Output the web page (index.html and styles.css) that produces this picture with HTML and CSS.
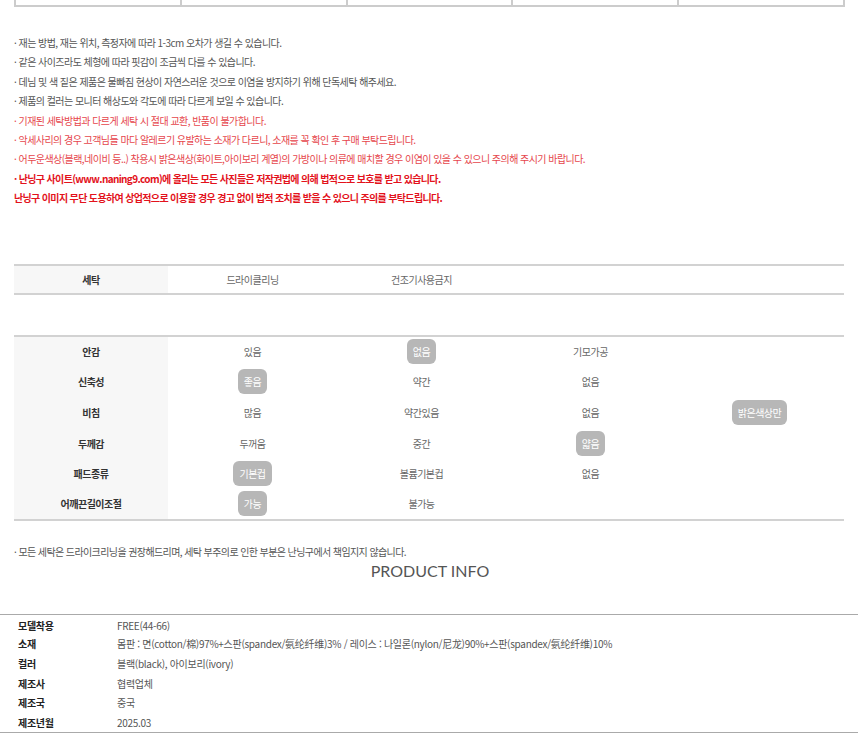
FILE: index.html
```html
<!DOCTYPE html>
<html lang="ko">
<head>
    <meta charset="UTF-8">
    <meta name="viewport" content="width=device-width, initial-scale=1.0">
    <title>상품 상세 정보</title>
    <link rel="stylesheet" href="styles.css">
</head>
<body>

<div class="size-bottom">
    <div class="size-cell"></div>
    <div class="size-cell"></div>
    <div class="size-cell"></div>
    <div class="size-cell"></div>
    <div class="size-cell"></div>
</div>

<ul class="notes">
    <li>· 재는 방법, 재는 위치, 측정자에 따라 1-3cm 오차가 생길 수 있습니다.</li>
    <li>· 같은 사이즈라도 체형에 따라 핏감이 조금씩 다를 수 있습니다.</li>
    <li>· 데님 및 색 짙은 제품은 물빠짐 현상이 자연스러운 것으로 이염을 방지하기 위해 단독세탁 해주세요.</li>
    <li>· 제품의 컬러는 모니터 해상도와 각도에 따라 다르게 보일 수 있습니다.</li>
    <li class="red">· 기재된 세탁방법과 다르게 세탁 시 절대 교환, 반품이 불가합니다.</li>
    <li class="red">· 악세사리의 경우 고객님들 마다 알레르기 유발하는 소재가 다르니, 소재를 꼭 확인 후 구매 부탁드립니다.</li>
    <li class="red">· 어두운색상(블랙,네이비 등..) 착용시 밝은색상(화이트,아이보리 계열)의 가방이나 의류에 매치할 경우 이염이 있을 수 있으니 주의해 주시기 바랍니다.</li>
    <li class="warn">· 난닝구 사이트(www.naning9.com)에 올리는 모든 사진들은 저작권법에 의해 법적으로 보호를 받고 있습니다.</li>
    <li class="warn">난닝구 이미지 무단 도용하여 상업적으로 이용할 경우 경고 없이 법적 조치를 받을 수 있으니 주의를 부탁드립니다.</li>
</ul>

<table class="spec wash">
    <tr>
        <th>세탁</th>
        <td>드라이클리닝</td>
        <td>건조기사용금지</td>
        <td></td>
        <td></td>
    </tr>
</table>

<table class="spec props">
    <tr>
        <th>안감</th>
        <td>있음</td>
        <td><span class="pill">없음</span></td>
        <td>기모가공</td>
        <td></td>
    </tr>
    <tr>
        <th>신축성</th>
        <td><span class="pill">좋음</span></td>
        <td>약간</td>
        <td>없음</td>
        <td></td>
    </tr>
    <tr>
        <th>비침</th>
        <td>많음</td>
        <td>약간있음</td>
        <td>없음</td>
        <td><span class="pill">밝은색상만</span></td>
    </tr>
    <tr>
        <th>두께감</th>
        <td>두꺼움</td>
        <td>중간</td>
        <td><span class="pill">얇음</span></td>
        <td></td>
    </tr>
    <tr>
        <th>패드종류</th>
        <td><span class="pill">기본컵</span></td>
        <td>볼륨기본컵</td>
        <td>없음</td>
        <td></td>
    </tr>
    <tr>
        <th>어깨끈길이조절</th>
        <td><span class="pill">가능</span></td>
        <td>불가능</td>
        <td></td>
        <td></td>
    </tr>
</table>

<p class="care-note">· 모든 세탁은 드라이크리닝을 권장해드리며, 세탁 부주의로 인한 부분은 난닝구에서 책임지지 않습니다.</p>

<h2 class="info-title">PRODUCT INFO</h2>

<table class="info">
    <tr><th>모델착용</th><td>FREE(44-66)</td></tr>
    <tr><th>소재</th><td>몸판 : 면(cotton/棉)97%+스판(spandex/氨纶纤维)3% / 레이스 : 나일론(nylon/尼龙)90%+스판(spandex/氨纶纤维)10%</td></tr>
    <tr><th>컬러</th><td>블랙(black), 아이보리(ivory)</td></tr>
    <tr><th>제조사</th><td>협력업체</td></tr>
    <tr><th>제조국</th><td>중국</td></tr>
    <tr><th>제조년월</th><td>2025.03</td></tr>
</table>

</body>
</html>
```

FILE: styles.css
```css
body {
    margin: 0;
    font-family: "Noto Sans CJK KR", "Noto Sans", sans-serif;
    font-size: 10px;
    color: #555;
    background-color: #fff;
}
.size-bottom {
    display: flex;
    margin: 0 15px 0 14px;
    height: 5px;
    border-bottom: 2px solid #ccc;
    border-right: 2px solid #ccc;
}
.size-cell {
    flex: 1;
    border-left: 2px solid #ccc;
}
.notes {
    list-style: none;
    margin: 26px 0 0 14px;
    padding: 0;
}
.notes li {
    line-height: 19.4px;
    letter-spacing: -0.55px;
}
.notes .red {
    color: #e6464c;
}
.notes .warn {
    color: #e3121c;
    font-weight: bold;
    letter-spacing: -0.65px;
}
.spec {
    width: 830px;
    margin: 0 0 0 14px;
    border-collapse: collapse;
    table-layout: fixed;
    border-top: 2px solid #d2d2d2;
    border-bottom: 2px solid #d2d2d2;
}
.spec th,
.spec td {
    padding: 0;
    text-align: center;
    letter-spacing: -0.5px;
}
.spec th {
    width: 154px;
    background-color: #f7f7f7;
    color: #333;
    font-weight: bold;
}
.spec td {
    color: #666;
}
.wash {
    margin-top: 56px;
}
.wash tr {
    height: 29px;
}
.props {
    margin-top: 40px;
}
.props tr {
    height: 30.7px;
}
.pill {
    display: inline-block;
    padding: 0 6px;
    line-height: 25px;
    border-radius: 6px;
    background-color: #b7b7b7;
    color: #fff;
}
.care-note {
    margin: 23px 0 0 14px;
    line-height: 16px;
    letter-spacing: -0.6px;
}
.info-title {
    margin: 1px 0 0;
    text-align: center;
    font-family: Lato, "Noto Sans", sans-serif;
    font-size: 16px;
    font-weight: normal;
    color: #555;
    line-height: 20px;
}
.info {
    width: 858px;
    margin-top: 33px;
    border-collapse: collapse;
    border-top: 1px solid #aaa;
    border-bottom: 1px solid #aaa;
}
.info tr {
    height: 19.7px;
}
.info tr:first-child th,
.info tr:first-child td {
    padding-top: 2px;
}
.info th,
.info td {
    padding: 0;
    text-align: left;
    letter-spacing: -0.3px;
}
.info th {
    width: 99px;
    padding-left: 18px;
    color: #222;
    font-weight: bold;
}
.info td {
    color: #555;
}
```
